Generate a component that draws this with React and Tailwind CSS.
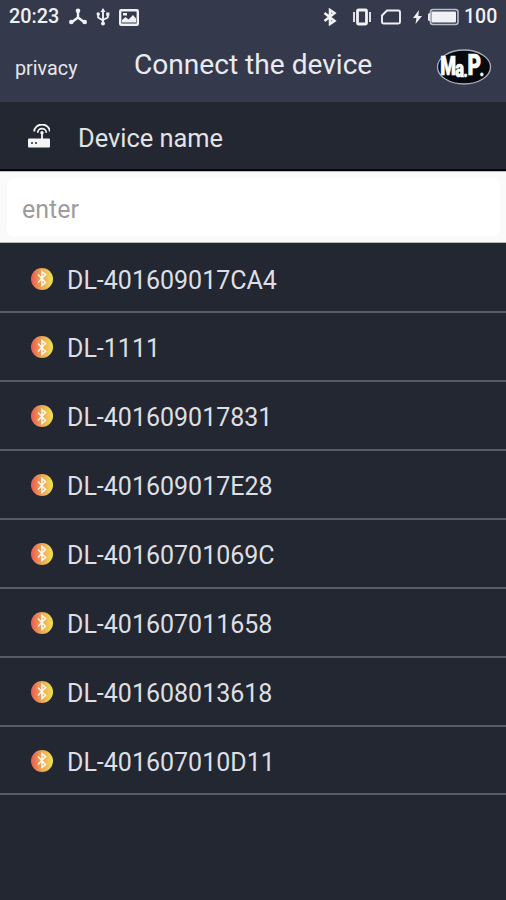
import React, { useState } from "react";

const devices = [
  "DL-401609017CA4",
  "DL-1111",
  "DL-401609017831",
  "DL-401609017E28",
  "DL-40160701069C",
  "DL-401607011658",
  "DL-401608013618",
  "DL-401607010D11",
];

const StatusBar = () => (
  <div className="h-[34px] pl-[9px] pr-[9px] flex items-center justify-between font-medium text-[#f0f1f5]">
    <div className="flex items-center">
      <span className="w-[51px] whitespace-nowrap text-[19.8px] leading-[24px]">20:23</span>
      <svg className="ml-[9px] h-[18px] w-[18px]" viewBox="0 0 18 18" fill="none" stroke="currentColor" strokeWidth="2.400">
        <path d="M9 3v7M9 9.500L3 14M9 9.500l6 4.500" />
        <circle cx="9" cy="2.700" r="2.300" fill="currentColor" stroke="none" />
        <circle cx="2.300" cy="14" r="2.300" fill="currentColor" stroke="none" />
        <circle cx="15.700" cy="14" r="2.300" fill="currentColor" stroke="none" />
      </svg>
      <svg className="ml-[9px] h-[18px] w-[14px]" viewBox="0 0 14 18" fill="none" stroke="currentColor" strokeWidth="1.900">
        <path d="M7 3v12M2.200 6v3.500L7 12.500M11.800 6v3.500L7 12" />
        <path d="M7 0l2.500 4h-5z" fill="currentColor" stroke="none" />
        <circle cx="7" cy="15.500" r="2" fill="currentColor" stroke="none" />
        <circle cx="2.200" cy="6" r="1.700" fill="currentColor" stroke="none" />
        <path d="M10.200 4.500h3.200v3.200h-3.200z" fill="currentColor" stroke="none" />
      </svg>
      <svg className="ml-[9px] h-[17px] w-[20px]" viewBox="0 0 20 17" fill="none">
        <rect x="1.200" y="1.200" width="17.600" height="14.600" rx="1" stroke="currentColor" strokeWidth="2.400" />
        <path d="M3 13.500V11l3.500-3 3 2.500L14 6l3 3.500v4z" fill="currentColor" />
        <rect x="4" y="4" width="4" height="2.500" fill="currentColor" />
      </svg>
    </div>
    <div className="flex items-center">
      <svg className="h-[18px] w-[14px]" viewBox="0 0 14 18" fill="none" stroke="currentColor" strokeWidth="2.500">
        <path d="M1.500 5l10 8L7 16v-14L11.500 5l-10 8" />
      </svg>
      <svg className="ml-[15px] h-[18px] w-[20px]" viewBox="0 0 20 18" fill="none" stroke="currentColor">
        <rect x="5.500" y="2" width="9" height="14" rx="1" strokeWidth="2.800" />
        <path d="M2 4v10M18 4v10" strokeWidth="1.800" />
      </svg>
      <svg className="ml-[9px] h-[16px] w-[20px]" viewBox="0 0 20 16" fill="none" stroke="currentColor" strokeWidth="1.900">
        <path d="M6 1.500H17.500a1.500 1.500 0 0 1 1.500 1.500v10a1.500 1.500 0 0 1-1.500 1.500h-15A1.500 1.500 0 0 1 1 13V6.500z" />
      </svg>
      <svg className="ml-[12px] h-[16px] w-[9px]" viewBox="0 0 9 16" fill="currentColor">
        <path d="M6 1L0 9h3.500L2.500 15 9 7H5.300z" />
      </svg>
      <svg className="ml-[5px] h-[18px] w-[32px]" viewBox="0 0 32 18" fill="none">
        <path d="M4 5H2.500A1.500 1.500 0 0 0 1 6.500v5A1.500 1.500 0 0 0 2.500 13H4" fill="currentColor" />
        <rect x="3.500" y="1.500" width="27.500" height="15" rx="2.500" stroke="#b9bdc9" strokeWidth="1.600" />
        <rect x="4.500" y="3.500" width="24.500" height="11" rx="1" fill="currentColor" />
      </svg>
      <span className="ml-[5px] w-[33px] whitespace-nowrap text-[19.5px] leading-[24px]">100</span>
    </div>
  </div>
);

const Logo = () => (
  <svg className="h-[36px] w-[56px]" viewBox="0 0 56 36">
    <ellipse cx="28" cy="18" rx="26.500" ry="17" fill="#08090d" stroke="#a9aebc" strokeWidth="1.300" />
    <text transform="scale(0.72 1)" x="6" y="26" fontFamily="Roboto, sans-serif" fontWeight="900" fill="#fff" stroke="#fff" strokeWidth="0.700">
      <tspan fontSize="25">M</tspan>
      <tspan fontSize="23" dx="-1" dy="2">a</tspan>
      <tspan fontSize="19" dx="-1">.</tspan>
      <tspan fontSize="29" dy="-2">P</tspan>
      <tspan fontSize="19" dx="-2" dy="1">.</tspan>
    </text>
  </svg>
);

const RouterIcon = () => (
  <svg className="h-[24px] w-[22px]" viewBox="0 0 22 24" fill="none" stroke="#f5f5f7" strokeWidth="1.800">
    <rect x="0" y="14.500" width="22" height="9" rx="1" fill="#f5f5f7" stroke="none" />
    <path d="M14 8v7M6.200 7.500a7.800 7 0 0 1 15.600 0M9.700 8.800a4.300 4.200 0 0 1 8.600 0" />
    <circle cx="14" cy="8.800" r="1.700" fill="#f5f5f7" stroke="none" />
    <circle cx="4" cy="19" r="1" fill="#232733" stroke="none" />
    <circle cx="8" cy="19" r="1" fill="#232733" stroke="none" />
  </svg>
);

const DeviceRow = ({ name }) => (
  <li className="h-[68.860px] pl-[31px] flex items-center border-b-2 border-[#585c67]">
    <span className="mt-[1px] h-[22px] w-[22px] shrink-0 flex items-center justify-center rounded-full bg-linear-to-r from-[#e95852] via-[#eba654] to-[#efe354]">
      <svg className="h-[17px] w-[12px]" viewBox="0 0 12 17" fill="none" stroke="#fff8ec" strokeWidth="1.500">
        <path d="M2 4.500l7.500 8L6 15.500v-14l3.500 3-7.500 8" />
      </svg>
    </span>
    <span className="ml-[14px] mt-[5px] text-[25px] leading-[30px] text-[#dedfe3]">{name}</span>
  </li>
);

export default function App() {
  const [query, setQuery] = useState("");

  return (
    <div className="h-[900px] w-full overflow-hidden bg-[#232731] font-['Roboto',sans-serif]">
      <header className="h-[102px] bg-[#34394c]">
        <StatusBar />
        <div className="h-[66px] pl-[15px] pr-[14px] flex items-center">
          <button className="w-[119px] pt-[3px] text-left text-[19.8px] text-[#e6e7ec]">privacy</button>
          <h1 className="grow pb-[4px] whitespace-nowrap text-[28.1px] leading-[34px] text-[#e9eaef]">Connect the device</h1>
          <Logo />
        </div>
      </header>

      <div className="h-[69px] pl-[28px] flex items-center border-b-2 border-[#050609]">
        <RouterIcon />
        <h2 className="ml-[28px] mt-[4px] text-[25.4px] leading-[32px] text-[#e2e3e7]">Device name</h2>
      </div>

      <div className="h-[72px] p-[6px] pl-[7px] bg-[#fafafa] border-y border-[#b8b9bc]">
        <input
          value={query}
          onChange={(e) => setQuery(e.target.value)}
          placeholder="enter"
          className="h-full w-full rounded-md bg-white pl-[15px] pt-[4px] text-[25px] text-gray-700 outline-none placeholder:text-[#9d9d9d]"
        />
      </div>

      <ul className="pt-[1.6px]">
        {devices.map((name) => (
          <DeviceRow key={name} name={name} />
        ))}
      </ul>
    </div>
  );
}
